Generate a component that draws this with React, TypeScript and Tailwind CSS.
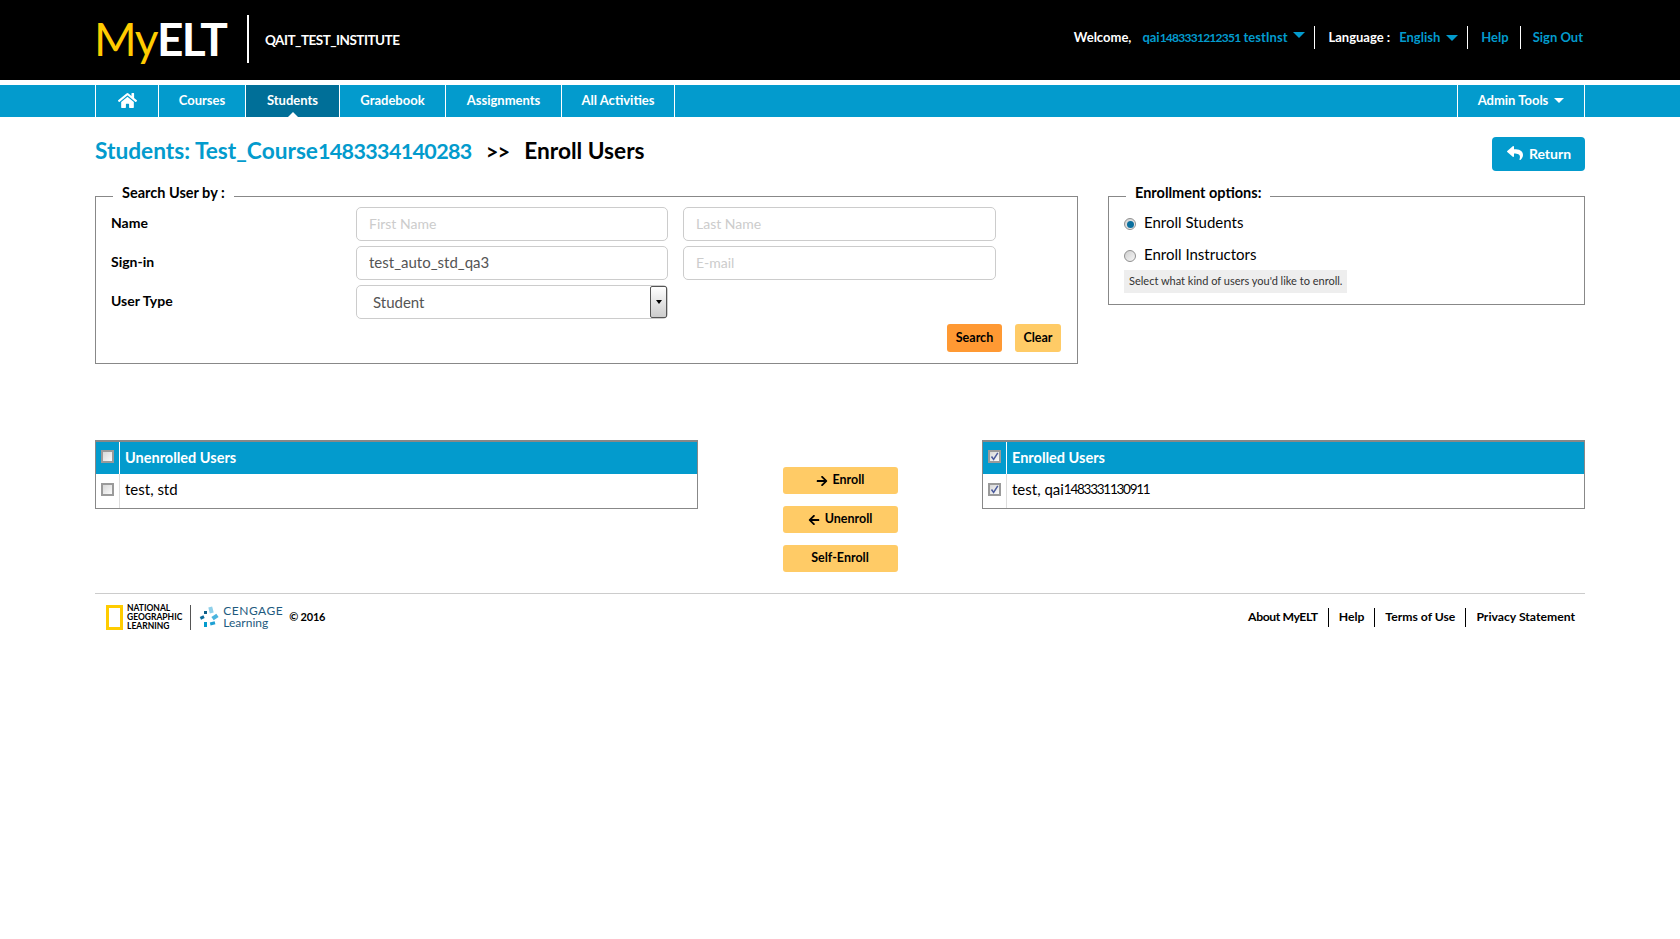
import React from "react";
import { FaHome, FaReply, FaArrowRight, FaArrowLeft } from "react-icons/fa";

const font = "font-['Lato',sans-serif]";

const Caret = ({ size = "big" }: { size?: string }) => (
  <span
    className={
      size === "big"
        ? "inline-block w-0 h-0 border-x-[6px] border-x-transparent border-t-[6px] border-t-[#039bcd]"
        : "inline-block w-0 h-0 border-x-[5px] border-x-transparent border-t-[5px] border-t-white"
    }
  />
);

const Check = ({ checked }: { checked: boolean }) => (
  <span className="flex items-center justify-center w-[13px] h-[13px] border-2 border-[#9a9a9a] bg-gradient-to-br from-[#d8d8d8] to-[#fafafa]">
    {checked && (
      <svg width="9" height="9" viewBox="0 0 9 9">
        <path d="M1.5 4.5 L3.6 7.5 L7.8 0.8" fill="none" stroke="#4a5a9c" strokeWidth="1.5" />
      </svg>
    )}
  </span>
);

const Radio = ({ on }: { on: boolean }) => (
  <span className="flex items-center justify-center w-[12px] h-[12px] mt-[3px] rounded-full border border-[#8f8f8f] bg-gradient-to-br from-[#cfcfcf] to-[#f7f7f7]">
    {on && <span className="w-[7px] h-[7px] rounded-full bg-[#0b6f9e]" />}
  </span>
);

const UserTable = ({ title, children, checked }: { title: string; children: React.ReactNode; checked: boolean }) => (
  <div className="w-[603px] border border-[#888] border-t-2 h-[69px]">
    <div className="flex h-[32px] bg-[#039bcd]">
      <div className="w-[24px] flex items-center justify-center border-r border-white pb-[3px]">
        <Check checked={checked} />
      </div>
      <div className="pl-[5px] flex items-center text-white text-[14.5px] font-bold">{title}</div>
    </div>
    <div className="flex h-[34px]">
      <div className="w-[24px] flex items-center justify-center border-r border-[#ddd] pb-[4px]">
        <Check checked={checked} />
      </div>
      <div className="pl-[5px] flex items-center text-black text-[15px] pb-[4px]">{children}</div>
    </div>
  </div>
);

const NavItem = ({ w, children, active }: { w: string; children: React.ReactNode; active?: boolean }) => (
  <div
    className={`relative flex items-center justify-center h-full pb-[1px] border-r border-white text-white text-[13px] font-bold ${w} ${
      active ? "bg-[#006f98]" : ""
    }`}
  >
    {children}
    {active && (
      <span className="absolute bottom-0 left-1/2 -translate-x-1/2 w-0 h-0 border-x-[5px] border-x-transparent border-b-[5px] border-b-white" />
    )}
  </div>
);

const inputCls =
  "h-[34px] w-[312px] rounded-[5px] border border-[#ccc] px-[12px] pb-[3px] text-[15px] font-normal text-[#555] placeholder:text-[#ccc] placeholder:text-[14px] outline-none";

export default function App() {
  return (
    <div className={`min-h-[939px] bg-white text-black ${font}`}>
      <div className="h-[80px] bg-black">
        <div className="mx-auto w-[1490px] h-full flex items-center">
          <div className="w-[131px] flex items-baseline text-[46px] leading-none tracking-[-1.5px] pb-[2px] -ml-[1px]">
            <span className="text-[#ffcc00]">My</span>
            <span className="text-white font-bold">ELT</span>
          </div>
          <div className="ml-[22px] w-[2px] h-[48px] bg-white mb-[2px]" />
          <div className="ml-[16px] text-white font-bold text-[13.5px] tracking-[-0.5px]">QAIT_TEST_INSTITUTE</div>
          <div className="ml-auto flex items-center text-[13px] font-bold pb-[5px] pr-[2px]">
            <span className="text-white">Welcome,</span>
            <span className="ml-[11px] text-[#039bcd]">
              qai<span className="text-[12px] tracking-[-0.75px]">1483331212351</span> testInst
            </span>
            <span className="ml-[6px] mb-[6px] flex"><Caret /></span>
            <span className="ml-[9px] w-px h-[23px] bg-white" />
            <span className="ml-[13px] text-white">Language :</span>
            <span className="ml-[9px] text-[#039bcd]">English</span>
            <span className="ml-[6px] flex"><Caret /></span>
            <span className="ml-[9px] w-px h-[23px] bg-white" />
            <span className="ml-[13px] text-[#039bcd]">Help</span>
            <span className="ml-[11px] w-px h-[23px] bg-white" />
            <span className="ml-[12px] text-[#039bcd]">Sign Out</span>
          </div>
        </div>
      </div>

      <div className="mt-[5px] h-[32px] bg-[#039bcd]">
        <div className="mx-auto w-[1490px] h-full flex border-l border-white">
          <NavItem w="w-[63px]"><FaHome size={19} /></NavItem>
          <NavItem w="w-[87px]">Courses</NavItem>
          <NavItem w="w-[94px]" active>Students</NavItem>
          <NavItem w="w-[106px]">Gradebook</NavItem>
          <NavItem w="w-[116px]">Assignments</NavItem>
          <NavItem w="w-[113px]">All Activities</NavItem>
          <div className="ml-auto flex h-full border-l border-white">
            <NavItem w="w-[127px]">
              Admin Tools
              <span className="ml-[6px] flex"><Caret size="small" /></span>
            </NavItem>
          </div>
        </div>
      </div>

      <div className="mx-auto w-[1490px]">
        <div className="flex items-start justify-between h-[34px] mt-[20px]">
          <div className="flex items-center h-[28px] text-[22.7px] font-bold">
            <span className="text-[#039bcd]">
              Students: Test_Course<span className="text-[21.5px] tracking-[-0.65px]">1483334140283</span>
            </span>
            <span className="ml-[14px] text-[22px] tracking-[-1px]">&gt;&gt;</span>
            <span className="ml-[15px]">Enroll Users</span>
          </div>
          <div className="flex items-center justify-center gap-[6px] w-[93px] h-[34px] pb-[2px] pl-[1px] rounded-[4px] bg-[#039bcd] text-white text-[14px] font-bold">
            <FaReply size={16} />
            Return
          </div>
        </div>

        <div className="flex items-start mt-[14px]">
          <fieldset className="w-[983px] h-[179px] border border-[#888] px-[15px] pt-0">
            <legend className="ml-[2px] px-[9px] pb-[6px] text-[14.5px] font-bold leading-[16px]">Search User by :</legend>
            <div className="flex flex-col gap-[5px] text-[14px] font-bold">
              <div className="flex items-center">
                <div className="w-[245px] pb-[3px]">Name</div>
                <input className={inputCls} placeholder="First Name" readOnly />
                <input className={`${inputCls} ml-[15px] w-[313px]`} placeholder="Last Name" readOnly />
              </div>
              <div className="flex items-center">
                <div className="w-[245px] pb-[3px]">Sign-in</div>
                <input className={inputCls} value="test_auto_std_qa3" readOnly />
                <input className={`${inputCls} ml-[15px] w-[313px]`} placeholder="E-mail" readOnly />
              </div>
              <div className="flex items-center">
                <div className="w-[245px] pb-[3px]">User Type</div>
                <div className="relative flex items-center h-[34px] w-[312px] rounded-[5px] border border-[#ccc] pl-[16px] text-[15px] font-normal text-[#555]">
                  Student
                  <span className="absolute right-0 top-0 bottom-0 w-[17px] flex items-center justify-center rounded-[2px] border border-[#555] bg-gradient-to-b from-white to-[#ccc]">
                    <span className="w-0 h-0 border-x-[3px] border-x-transparent border-t-[4px] border-t-black" />
                  </span>
                </div>
              </div>
            </div>
            <div className="flex justify-end gap-[13px] mt-[5px] mr-[1px] text-[12.5px] font-bold">
              <div className="flex items-center justify-center w-[55px] h-[28px] rounded-[3px] bg-[#ff9933]">Search</div>
              <div className="flex items-center justify-center w-[46px] h-[28px] rounded-[3px] bg-[#ffcb66]">Clear</div>
            </div>
          </fieldset>

          <fieldset className="ml-[30px] w-[477px] h-[120px] border border-[#888] px-[15px] pt-0">
            <legend className="ml-[2px] px-[9px] pb-[6px] text-[14.5px] font-bold leading-[16px]">Enrollment options:</legend>
            <div className="mt-[6px] flex flex-col gap-[13px] text-[15px]">
              <div className="flex items-center gap-[8px] h-[19px]"><Radio on />Enroll Students</div>
              <div className="flex items-center gap-[8px] h-[19px]"><Radio on={false} />Enroll Instructors</div>
            </div>
            <div className="mt-[6px] inline-flex items-center h-[23px] px-[5px] bg-[#eee] text-[11px] text-[#333]">
              Select what kind of users you'd like to enroll.
            </div>
          </fieldset>
        </div>

        <div className="flex items-start justify-between mt-[76px]">
          <UserTable title="Unenrolled Users" checked={false}>test, std</UserTable>
          <div className="flex flex-col gap-[12px] mt-[27px] text-[12.5px] font-bold">
            <div className="flex items-center justify-center gap-[5px] w-[115px] h-[27px] rounded-[3px] bg-[#ffcb66]"><FaArrowRight size={12} />Enroll</div>
            <div className="flex items-center justify-center gap-[5px] w-[115px] h-[27px] rounded-[3px] bg-[#ffcb66]"><FaArrowLeft size={12} />Unenroll</div>
            <div className="flex items-center justify-center w-[115px] h-[27px] rounded-[3px] bg-[#ffcb66]">Self-Enroll</div>
          </div>
          <UserTable title="Enrolled Users" checked>
            test, qai<span className="text-[13.5px] tracking-[-1.25px]">1483331130911</span>
          </UserTable>
        </div>

        <div className="mt-[21px] border-t border-[#ccc] flex items-center justify-between h-[47px] px-[11px] pr-[10px]">
          <div className="flex items-center">
            <div className="w-[17px] h-[25px] border-[3px] border-[#ffcc00]" />
            <div className="ml-[4px] text-[8.5px] leading-[9px] font-bold">
              NATIONAL<br />GEOGRAPHIC<br />LEARNING
            </div>
            <div className="ml-[8px] w-px h-[25px] bg-[#555]" />
            <svg className="ml-[8px]" width="20" height="22" viewBox="0 0 20 22">
              <rect x="10" y="1" width="4" height="6" fill="#8fd0ea" transform="rotate(-15 12 4)" />
              <rect x="13" y="9" width="6" height="4" fill="#4ab4de" transform="rotate(-35 16 11)" />
              <rect x="11" y="16" width="5" height="3" fill="#1ea0d4" transform="rotate(-15 13 17)" />
              <rect x="5" y="16" width="3" height="5" fill="#039bcd" />
              <rect x="1" y="10" width="4" height="3" fill="#0d6d9c" transform="rotate(-25 3 11)" />
              <rect x="5" y="5" width="3" height="3" fill="#0d5f88" />
            </svg>
            <div className="ml-[4px] text-[#1d5a7e] leading-[12px]">
              <div className="text-[12px] tracking-[0.5px]">CENGAGE</div>
              <div className="text-[12px]">Learning</div>
            </div>
            <div className="ml-[6px] text-[11px] font-bold tracking-[-0.2px]">© 2016</div>
          </div>
          <div className="flex items-center text-[12.2px] font-bold">
            <span className="tracking-[-0.4px]">About MyELT</span>
            <span className="mx-[10px] w-px h-[19px] bg-black" />
            <span>Help</span>
            <span className="mx-[10px] w-px h-[19px] bg-black" />
            <span>Terms of Use</span>
            <span className="mx-[10px] w-px h-[19px] bg-black" />
            <span>Privacy Statement</span>
          </div>
        </div>
      </div>
    </div>
  );
}
